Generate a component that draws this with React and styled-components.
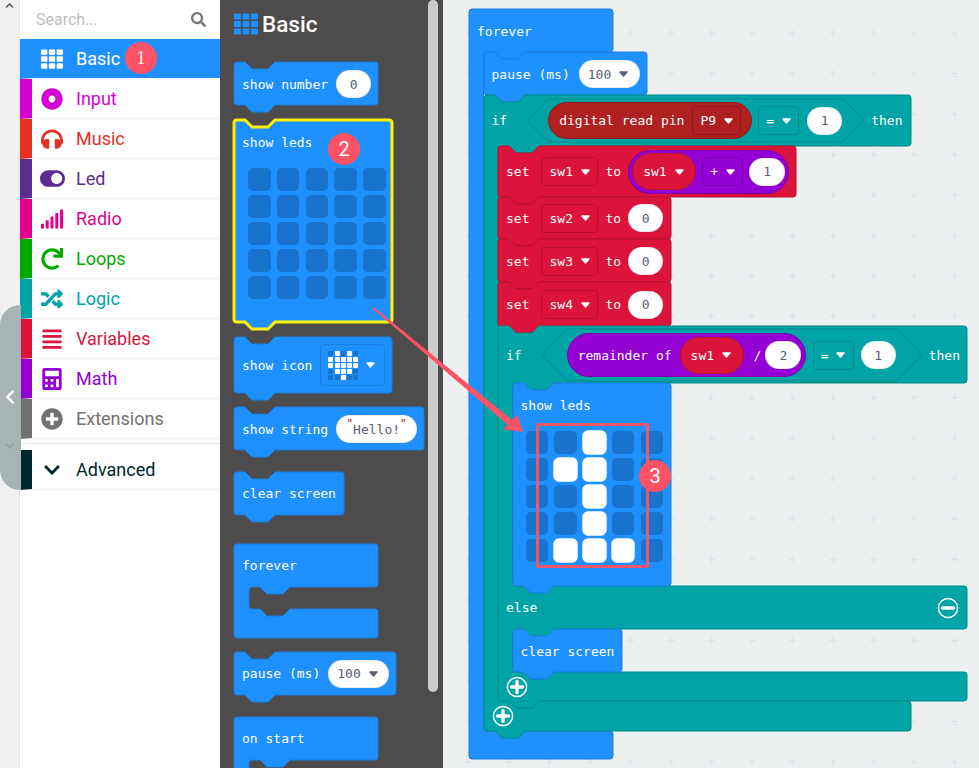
import React from "react";
import styled, { createGlobalStyle } from "styled-components";
import {
  FaTh, FaSearch, FaHeadphones, FaToggleOn, FaSignal, FaRedo, FaRandom,
  FaAlignJustify, FaCalculator, FaPlusCircle, FaChevronDown, FaChevronUp, FaChevronLeft, FaDotCircle,
} from "react-icons/fa";

const C = {
  blue: ["#1e90ff", "#1b7fdf"],
  teal: ["#00a4a6", "#008a8c"],
  red: ["#dc143c", "#b8112f"],
  purple: ["#9400d3", "#7600a8"],
  brick: ["#af2121", "#8c1a1a"],
};

const Global = createGlobalStyle`
  html, body { margin: 0; padding: 0; height: 100%; overflow: hidden; background: #ecf0f1; }
  * { box-sizing: border-box; }
`;

const Page = styled.div`
  position: relative;
  display: flex;
  width: 979px;
  height: 768px;
  overflow: hidden;
`;

/* ---------- toolbox ---------- */
const Rail = styled.div`
  width: 20px;
  flex: none;
  background: #f1f1f1;
  border-right: 1px solid #e6e6e6;
  color: #555;
  display: flex;
  justify-content: center;
  font-size: 9px;
  padding-top: 1px;
`;
const Handle = styled.div`
  position: absolute;
  left: 0;
  top: 305px;
  width: 21px;
  height: 185px;
  background: #a7b3b4;
  border-radius: 20px 0 0 20px;
  display: flex;
  flex-direction: column;
  align-items: center;
  color: #fff;
  font-size: 16px;
  padding-top: 84px;
  padding-right: 2px;
`;
const FaintChevron = styled.div`
  margin-top: 36px;
  color: #929fa0;
  font-size: 10px;
  line-height: 1;
`;
const Toolbox = styled.nav`
  width: 200px;
  flex: none;
  background: #fff;
  font-family: Roboto, sans-serif;
`;
const SearchRow = styled.div`
  height: 39px;
  display: flex;
  align-items: center;
  justify-content: space-between;
  padding: 0 14px 1px 16px;
  color: #bdbdbd;
  font-size: 16px;
  svg { color: #7a7a7a; font-size: 15px; }
`;
const Row = styled.div`
  height: 40px;
  display: flex;
  align-items: center;
  gap: 4px;
  font-size: 18px;
  background: ${(p) => (p.$active ? p.$c : "#fff")};
  color: ${(p) => (p.$active ? "#fff" : p.$c)};
  border-left: 12px solid ${(p) => p.$c};
  border-bottom: 1px solid ${(p) => (p.$active ? "#fff" : "#eee")};
`;
const RowIcon = styled.span`
  width: 40px;
  display: flex;
  justify-content: center;
  font-size: ${(p) => p.$s || 22}px;
`;
const Separator = styled.div`
  height: 6px;
  margin-top: -1px;
  margin-bottom: 6px;
  border-bottom: 1px solid #e6e6e6;
`;

/* ---------- flyout ---------- */
const Flyout = styled.aside`
  position: relative;
  width: 223px;
  flex: none;
  height: 768px;
  overflow: hidden;
  background: #4d4b4c;
  padding-left: 14px;
`;
const FlyTitle = styled.div`
  height: 47px;
  padding-top: 1px;
  display: flex;
  align-items: center;
  gap: 4px;
  color: #fff;
  font: 500 22.5px Roboto, sans-serif;
  svg { color: #1e90ff; font-size: 24px; }
`;
const Scroll = styled.div`
  position: absolute;
  left: 208px;
  top: 0;
  width: 10px;
  height: 692px;
  border-radius: 5px;
  background: #ccc;
`;
const Spacer = styled.div`
  height: ${(p) => p.$h}px;
`;

/* ---------- blocks ---------- */
function blockPath({ w, head, mouths = [], arms = [], inner = 14.5, notch = true, bump = true }) {
  const r = 3;
  let d = `M${r} 0`;
  if (notch) d += ` H11 L18 7 H34 L41 0`;
  d += ` H${w - r} Q${w} 0 ${w} ${r}`;
  let y = head;
  d += ` V${y - r} Q${w} ${y} ${w - r} ${y}`;
  mouths.forEach((m, i) => {
    const y2 = y + m;
    d += ` H${inner + 41} L${inner + 34} ${y + 7} H${inner + 18} L${inner + 11} ${y} H${inner + r} Q${inner} ${y} ${inner} ${y + r}`;
    d += ` V${y2 - r} Q${inner} ${y2} ${inner + r} ${y2} H${inner + 11} L${inner + 18} ${y2 + 7} H${inner + 34} L${inner + 41} ${y2} H${w - r} Q${w} ${y2} ${w} ${y2 + r}`;
    y = y2 + arms[i];
    d += ` V${y - r} Q${w} ${y} ${w - r} ${y}`;
  });
  if (bump) d += ` H41 L34 ${y + 7} H18 L11 ${y}`;
  d += ` H${r} Q0 ${y} 0 ${y - r} V${r} Q0 0 ${r} 0 Z`;
  return d;
}

const ShapeSvg = styled.svg`
  position: absolute;
  left: 0;
  top: 0;
  overflow: visible;
  pointer-events: none;
`;
const Shape = ({ color, outline, ...geo }) => (
  <ShapeSvg width={geo.w} height="10">
    <path
      d={blockPath(geo)}
      fill={color[0]}
      stroke={outline || color[1]}
      strokeWidth={outline ? 3 : 1}
    />
  </ShapeSvg>
);

const BlockBox = styled.div`
  position: relative;
  width: ${(p) => p.$w}px;
  height: ${(p) => p.$h}px;
  font: 13px "DejaVu Sans Mono", monospace;
  color: #fff;
  white-space: pre;
`;
const BlockRow = styled.div`
  position: relative;
  height: ${(p) => p.$h}px;
  display: flex;
  align-items: center;
  gap: ${(p) => p.$gap ?? 8}px;
  padding: ${(p) => p.$pt || 0}px 8px 0;
  justify-content: ${(p) => p.$justify || "flex-start"};
`;
const Stmt = ({ w, h, color = C.blue, gap, children, outline, pt }) => (
  <BlockBox $w={w} $h={h}>
    <Shape color={color} outline={outline} w={w} head={h} />
    <BlockRow $h={h} $gap={gap} $pt={pt}>{children}</BlockRow>
  </BlockBox>
);
const Mouth = styled.div`
  position: relative;
  height: ${(p) => p.$h}px;
  padding-left: 14.5px;
`;
const FootRow = styled.div`
  position: relative;
  height: ${(p) => p.$h}px;
  padding: 4px 0 0 8px;
`;

const Text = styled.span`
  margin-left: ${(p) => p.$ml || 0}px;
  margin-right: ${(p) => p.$mr || 0}px;
`;
const Pill = styled.span`
  flex: none;
  width: ${(p) => p.$w || 35}px;
  height: 28px;
  border-radius: 14px;
  background: #fff;
  border: 1px solid rgba(0, 0, 0, 0.08);
  color: #575e75;
  display: flex;
  align-items: center;
  justify-content: ${(p) => (p.$start ? "flex-start" : "center")};
  padding-left: ${(p) => (p.$start ? 8 : 0)}px;
  gap: ${(p) => (p.$start ? 8 : 0)}px;
`;
const Quote = styled.span`
  color: #a31515;
  font-size: 11px;
  align-self: flex-start;
  line-height: 16px;
`;
const CaretSvg = styled.svg`
  flex: none;
  display: block;
`;
const Caret = ({ color = "#fff" }) => (
  <CaretSvg width="9" height="6" viewBox="0 0 9 6">
    <path d="M1 1 H8 L4.5 5 Z" fill={color} stroke={color} strokeWidth="1.4" strokeLinejoin="round" />
  </CaretSvg>
);
const Drop = styled.span`
  flex: none;
  width: ${(p) => p.$w}px;
  height: 29px;
  margin-right: ${(p) => p.$mr || 0}px;
  border-radius: 4px;
  border: 1px solid ${(p) => p.$line};
  display: flex;
  align-items: center;
  padding-left: 7px;
  gap: 8px;
`;
const Reporter = styled.span`
  flex: none;
  width: ${(p) => p.$w}px;
  height: ${(p) => p.$h}px;
  border-radius: ${(p) => p.$h / 2}px;
  background: ${(p) => p.$c[0]};
  border: 1px solid ${(p) => p.$c[1]};
  display: flex;
  align-items: center;
  padding: 0 ${(p) => p.$pr ?? 3}px 0 ${(p) => p.$pl ?? 10}px;
  gap: ${(p) => p.$gap ?? 6}px;
`;

const HexBox = styled.div`
  position: relative;
  flex: none;
  width: ${(p) => p.$w}px;
  height: ${(p) => p.$h}px;
  display: flex;
  align-items: center;
  padding-left: ${(p) => p.$pl}px;
  gap: ${(p) => p.$gap}px;
`;
const Hex = ({ w, h, slope, children, pl, gap }) => (
  <HexBox $w={w} $h={h} $pl={pl} $gap={gap}>
    <ShapeSvg width={w} height={h}>
      <path
        d={`M${slope} 0 H${w - slope} L${w} ${h / 2} L${w - slope} ${h} H${slope} L0 ${h / 2} Z`}
        fill="none"
        stroke={C.teal[1]}
      />
    </ShapeSvg>
    {children}
  </HexBox>
);

const LedGrid = styled.div`
  position: relative;
  display: grid;
  grid-template-columns: repeat(5, 22.5px);
  grid-auto-rows: 22.5px;
  column-gap: 6.3px;
  row-gap: 4.5px;
  margin-left: ${(p) => p.$ml}px;
`;
const Led = styled.span`
  border-radius: 5px;
  background: ${(p) => (p.$on ? "#fff" : "#1873cc")};
  box-shadow: ${(p) => (p.$on ? "0 0 0 0.7px #fff" : "none")};
`;
const LedLabel = styled.div`
  position: relative;
  height: 48px;
  padding: 15px 0 0 8px;
  line-height: 15px;
`;
const ShowLeds = ({ w = 158, h = 203, on = [], outline, ml = 13 }) => (
  <BlockBox $w={w} $h={h}>
    <Shape color={C.blue} outline={outline} w={w} head={h} />
    <LedLabel>show leds</LedLabel>
    <LedGrid $ml={ml}>
      {Array.from({ length: 25 }, (_, i) => (
        <Led key={i} $on={on.includes(i)} />
      ))}
    </LedGrid>
  </BlockBox>
);

const IconField = styled.span`
  flex: none;
  width: 65px;
  height: 42px;
  border-radius: 4px;
  border: 1px solid ${C.blue[1]};
  display: flex;
  align-items: center;
  padding-left: 7px;
  gap: 8px;
`;
const MiniGrid = styled.span`
  display: grid;
  grid-template-columns: repeat(5, 5px);
  grid-auto-rows: 5px;
  gap: 1px 1.25px;
`;
const Mini = styled.span`
  background: ${(p) => (p.$on ? "#fff" : "#1873cc")};
  border-radius: 1px;
`;
const HEART = [1, 3, 5, 6, 7, 8, 9, 10, 11, 12, 13, 14, 16, 17, 18, 22];

const RingSvg = styled.svg`
  display: block;
  flex: none;
`;
const Ring = ({ plus }) => (
  <RingSvg width="22" height="22" viewBox="0 0 22 22">
    <circle cx="11" cy="11" r="9.6" fill="none" stroke="#fff" strokeWidth="1.5" />
    <path d="M5.5 11 H16.5" stroke="#fff" strokeWidth="3.4" strokeLinecap="round" />
    {plus && <path d="M11 5.5 V16.5" stroke="#fff" strokeWidth="3.4" strokeLinecap="round" />}
  </RingSvg>
);

const SetBlock = ({ name, h, children, w = 173, pt }) => (
  <Stmt w={w} h={h} color={C.red} gap={7} pt={pt}>
    <Text $mr={5}>set</Text>
    <Drop $w={57} $line={C.red[1]}>{name}<Caret /></Drop>
    <span>to</span>
    {children || <Pill>0</Pill>}
  </Stmt>
);

/* ---------- workspace ---------- */
const Workspace = styled.main`
  position: relative;
  flex: 1;
  height: 768px;
  overflow: hidden;
  background: #ecf0f1;
`;
const GridSvg = styled.svg`
  position: absolute;
  inset: 0;
  width: 100%;
  height: 100%;
`;
const Script = styled.div`
  position: absolute;
  left: 26px;
  top: 9px;
`;

/* ---------- annotations ---------- */
const Badge = styled.span`
  position: absolute;
  left: ${(p) => p.$x - 16}px;
  top: ${(p) => p.$y - 16}px;
  width: 32px;
  height: 32px;
  border-radius: 50%;
  background: #ff5264;
  color: #fff;
  font: ${(p) => (p.$serif ? '18px "Liberation Serif", serif' : '20px Roboto, sans-serif')};
  display: flex;
  align-items: center;
  justify-content: center;
`;
const HighlightBox = styled.div`
  position: absolute;
  left: 536px;
  top: 423px;
  width: 113px;
  height: 145px;
  border: 3px solid #f0566a;
  border-radius: 2px;
`;
const ArrowSvg = styled.svg`
  position: absolute;
  left: 0;
  top: 0;
  pointer-events: none;
`;

const items = [
  ["Input", "#d400d4", <FaDotCircle />],
  ["Music", "#e63022", <FaHeadphones />],
  ["Led", "#5c2d91", <FaToggleOn />, 25],
  ["Radio", "#e3008c", <FaSignal />, 24],
  ["Loops", "#00aa00", <FaRedo />, 22],
  ["Logic", "#00a4a6", <FaRandom />],
  ["Variables", "#dc143c", <FaAlignJustify />],
  ["Math", "#9400d3", <FaCalculator />],
  ["Extensions", "#717171", <FaPlusCircle />],
];

export default function App() {
  return (
    <Page>
      <Global />
      <Rail><FaChevronUp /></Rail>
      <Toolbox>
        <SearchRow>Search...<FaSearch /></SearchRow>
        <Row $active $c="#1e90ff"><RowIcon><FaTh /></RowIcon>Basic</Row>
        {items.map(([label, c, icon, s]) => (
          <Row key={label} $c={c}><RowIcon $s={s}>{icon}</RowIcon>{label}</Row>
        ))}
        <Separator />
        <Row $c="#00272b"><RowIcon $s={18}><FaChevronDown /></RowIcon>Advanced</Row>
      </Toolbox>
      <Handle>
        <FaChevronLeft />
        <FaintChevron><FaChevronDown /></FaintChevron>
      </Handle>

      <Flyout>
        <FlyTitle><FaTh />Basic</FlyTitle>
        <Spacer $h={15} />
        <Stmt w={144} h={43} pt={1}><span>show number</span><Pill>0</Pill></Stmt>
        <Spacer $h={15} />
        <ShowLeds w={158} h={202} outline="#fff200" ml={14} />
        <Spacer $h={15} />
        <Stmt w={158} h={56}>
          <span>show icon</span>
          <IconField>
            <MiniGrid>
              {Array.from({ length: 25 }, (_, i) => <Mini key={i} $on={HEART.includes(i)} />)}
            </MiniGrid>
            <Caret />
          </IconField>
        </Stmt>
        <Spacer $h={14} />
        <Stmt w={190} h={43} pt={1}>
          <span>show string</span>
          <Pill $w={81}><Quote>"</Quote>Hello!<Quote>"</Quote></Pill>
        </Stmt>
        <Spacer $h={22} />
        <Stmt w={110} h={43}>clear screen</Stmt>
        <Spacer $h={29} />
        <BlockBox $w={144} $h={94}>
          <Shape color={C.blue} w={144} head={43} mouths={[22]} arms={[29]} inner={15} notch={false} bump={false} />
          <BlockRow $h={43}>forever</BlockRow>
        </BlockBox>
        <Spacer $h={14} />
        <Stmt w={162} h={43}>
          <span>pause (ms)</span>
          <Pill $w={61} $start>100<Caret color="#575e75" /></Pill>
        </Stmt>
        <Spacer $h={22} />
        <BlockBox $w={144} $h={94}>
          <Shape color={C.blue} w={144} head={43} mouths={[22]} arms={[29]} inner={15} notch={false} bump={false} />
          <BlockRow $h={43}>on start</BlockRow>
        </BlockBox>
        <Scroll />
      </Flyout>

      <Workspace>
        <GridSvg>
          <defs>
            <pattern id="dots" width="40.5" height="40.5" patternUnits="userSpaceOnUse">
              <path d="M25.5 29.5 V36.5 M22 33 H29" stroke="#dbe0e3" strokeWidth="1" />
            </pattern>
          </defs>
          <rect width="100%" height="100%" fill="url(#dots)" />
        </GridSvg>
        <Script>
          <BlockBox $w={144} $h={750}>
            <Shape color={C.blue} w={144} head={43} mouths={[679]} arms={[28]} notch={false} bump={false} />
            <BlockRow $h={43} $pt={1}>forever</BlockRow>
            <Mouth $h={679}>
              <Stmt w={163} h={43} gap={9} pt={1}>
                <span>pause (ms)</span>
                <Pill $w={61} $start>100<Caret color="#575e75" /></Pill>
              </Stmt>
              <BlockBox $w={427} $h={636}>
                <Shape color={C.teal} w={427} head={51} mouths={[555]} arms={[30]} />
                <BlockRow $h={51} $gap={7}>
                  <Text $mr={13}>if</Text>
                  <Hex w={337} h={43} slope={21} pl={21} gap={6}>
                    <Reporter $w={204} $h={37} $c={C.brick} $pl={10} $gap={8}>
                      digital read pin
                      <Drop $w={49} $line={C.brick[1]}>P9<Caret /></Drop>
                    </Reporter>
                    <Drop $w={41} $mr={2} $line={C.teal[1]}>=<Caret /></Drop>
                    <Pill>1</Pill>
                  </Hex>
                  <span>then</span>
                </BlockRow>
                <Mouth $h={555}>
                  <SetBlock name="sw1" h={51} w={298}>
                    <Reporter $w={161} $h={44} $c={C.purple} $pl={3} $pr={4} $gap={6}>
                      <Reporter $w={64} $h={37} $c={C.red} $pl={10} $gap={8}>sw1<Caret /></Reporter>
                      <Drop $w={41} $line={C.purple[1]}>+<Caret /></Drop>
                      <Pill $w={36}>1</Pill>
                    </Reporter>
                  </SetBlock>
                  <SetBlock name="sw2" h={42} />
                  <SetBlock name="sw3" h={43} pt={1} />
                  <SetBlock name="sw4" h={44} pt={1} />
                  <BlockBox $w={469} $h={375}>
                    <Shape color={C.teal} w={469} head={57} mouths={[203, 43]} arms={[43, 29]} />
                    <BlockRow $h={57} $gap={7} $pt={1}>
                      <Text $mr={13}>if</Text>
                      <Hex w={380} h={52} slope={25} pl={25} gap={7}>
                        <Reporter $w={239} $h={44} $c={C.purple} $pl={10} $pr={4} $gap={8}>
                          remainder of
                          <Reporter $w={64} $h={37} $c={C.red} $pl={10} $gap={8}>sw1<Caret /></Reporter>
                          <Text $ml={2} $mr={-4}>/</Text>
                          <Pill $w={36}>2</Pill>
                        </Reporter>
                        <Drop $w={41} $line={C.teal[1]}>=<Caret /></Drop>
                        <Pill>1</Pill>
                      </Hex>
                      <span>then</span>
                    </BlockRow>
                    <Mouth $h={203}>
                      <ShowLeds on={[2, 6, 7, 12, 17, 21, 22, 23]} />
                    </Mouth>
                    <BlockRow $h={43} $justify="space-between">
                      else
                      <Ring />
                    </BlockRow>
                    <Mouth $h={43}>
                      <Stmt w={109} h={43} pt={1}>clear screen</Stmt>
                    </Mouth>
                    <FootRow $h={29}><Ring plus /></FootRow>
                  </BlockBox>
                </Mouth>
                <FootRow $h={30}><Ring plus /></FootRow>
              </BlockBox>
            </Mouth>
          </BlockBox>
        </Script>
      </Workspace>

      <HighlightBox />
      <ArrowSvg width="979" height="768">
        <path
          d="M372 308 L375 308 L512 420 L517 415 L523 432 L503 429 L508 425 Z"
          fill="#ff5264"
        />
      </ArrowSvg>
      <Badge $x={141} $y={58} $serif>1</Badge>
      <Badge $x={344} $y={149}>2</Badge>
      <Badge $x={655} $y={476}>3</Badge>
    </Page>
  );
}
